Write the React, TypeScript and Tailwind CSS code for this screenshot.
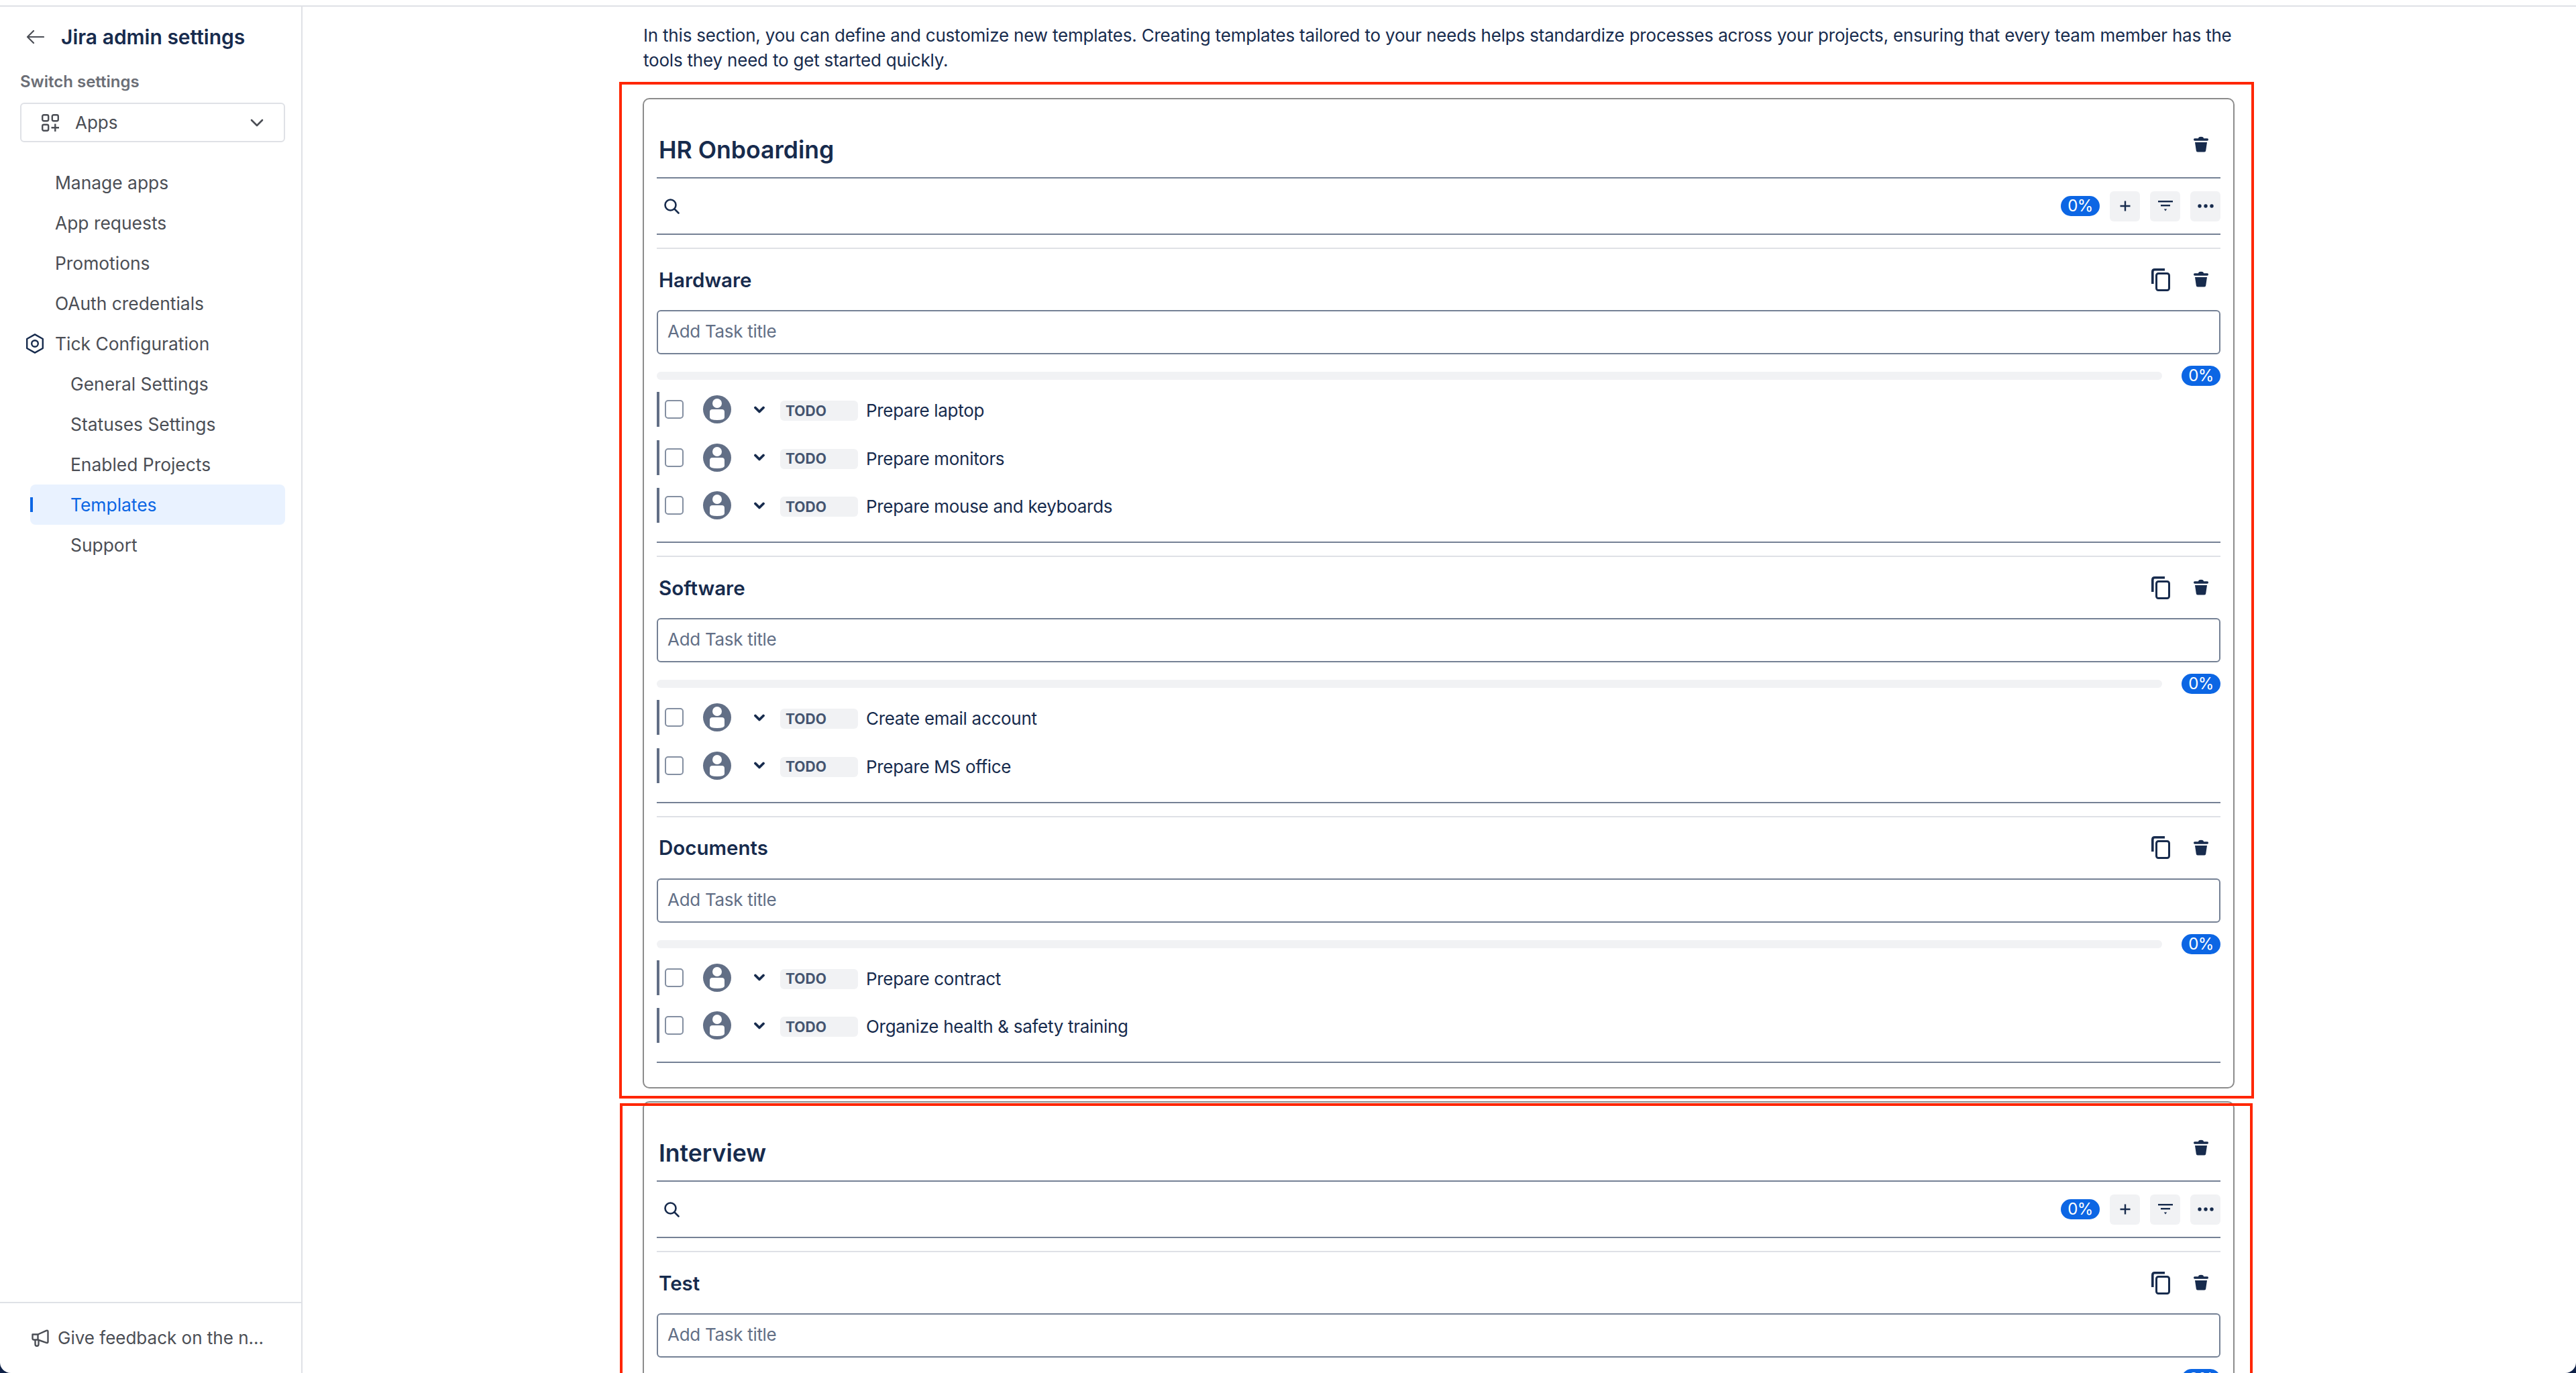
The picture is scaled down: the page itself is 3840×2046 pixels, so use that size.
import React from "react";

const Trash = () => (
  <svg width="22" height="24" viewBox="0 0 22 24" fill="#172b4d">
    <path d="M7 3.2 Q7.5 0.8 11 0.8 Q14.5 0.8 15 3.2 H20.5 Q22 3.2 22 5 Q22 6.8 20.5 6.8 H1.5 Q0 6.8 0 5 Q0 3.2 1.5 3.2 Z" />
    <path d="M2 9 H20 L18.2 21.5 Q18 23.4 16 23.4 H6 Q4 23.4 3.8 21.5 Z" />
  </svg>
);

const CopyIcon = () => (
  <svg width="28" height="34" viewBox="0 0 28 34" fill="none" stroke="#172b4d">
    <path d="M1.8 23 V5 Q1.8 1.8 5 1.8 H20" strokeWidth="3.6" />
    <rect x="7.5" y="7.5" width="19" height="25" rx="3" strokeWidth="3" />
  </svg>
);

const Avatar = () => (
  <svg width="42" height="42" viewBox="0 0 42 42">
    <circle cx="21" cy="21" r="21" fill="#626f86" />
    <circle cx="21" cy="12" r="7" fill="#fff" />
    <path d="M10 25 Q10 21 14 21 H28 Q32 21 32 25 V33 Q32 37 21 37 Q10 37 10 33 Z" fill="#fff" />
  </svg>
);

const SearchIcon = () => (
  <svg width="23" height="23" viewBox="0 0 23 23" fill="none" stroke="#172b4d" strokeWidth="2.6" strokeLinecap="round">
    <circle cx="9.5" cy="9.5" r="8" />
    <path d="M15.5 15.5 L21.5 21.5" />
  </svg>
);

const SmallChevron = () => (
  <svg width="16" height="11" viewBox="0 0 16 11" fill="none" stroke="#172b4d" strokeWidth="3.8" strokeLinecap="round" strokeLinejoin="round">
    <path d="M2 2.5 L8 8.5 L14 2.5" />
  </svg>
);

const Badge = () => (
  <span className="flex h-[30px] w-[58px] shrink-0 items-center justify-center rounded-full bg-[#0c66e4] text-[24px] leading-none tracking-[-0.5px] text-white">
    0%
  </span>
);

const ToolButton = ({ children }: { children: React.ReactNode }) => (
  <span className="flex h-[45px] w-[45px] items-center justify-center rounded-[6px] bg-[#f1f2f4]">{children}</span>
);

const Task = ({ title }: { title: string }) => (
  <div className="flex h-[52px] items-center">
    <span className="h-[52px] w-1 bg-[#626f86]" />
    <span className="ml-2 h-[28px] w-[28px] rounded-[5px] border-2 border-[#8590a2] bg-white" />
    <span className="ml-[29px] flex"><Avatar /></span>
    <span className="ml-[34px] flex"><SmallChevron /></span>
    <span className="ml-[23px] mt-[4px] flex h-[30px] w-[116px] items-center rounded-[6px] bg-[#f1f2f4] pl-[8px] text-[21px] font-bold leading-none text-[#44546f]">
      TODO
    </span>
    <span className="ml-[12px] mt-[4px] text-[26px] leading-[40px] tracking-[-0.3px] text-[#172b4d]">{title}</span>
  </div>
);

const Group = ({ title, tasks, last }: { title: string; tasks: string[]; last?: boolean }) => (
  <section className={`border-t-2 border-[#dfe1e6] ${last ? "" : "mb-[19px]"}`}>
    <div className="flex h-[91px] items-center justify-between pl-[3px]">
      <h3 className="text-[29.5px] font-semibold leading-[40px] text-[#172b4d]">{title}</h3>
      <div className="flex items-center">
        <CopyIcon />
        <span className="mb-[1px] ml-[35px] mr-[18px] flex"><Trash /></span>
      </div>
    </div>
    <input
      placeholder="Add Task title"
      className="block h-[66px] w-full rounded-[6px] border-2 border-[#758195] px-[14px] pb-[3px] text-[26px] tracking-[-0.3px] text-[#172b4d] placeholder:text-[#626f86]"
    />
    <div className="mt-[17px] flex h-[30px] items-center justify-between">
      <div className="h-3 w-[2244px] rounded-full bg-[#f1f2f4]" />
      <Badge />
    </div>
    {tasks.length > 0 && (
      <div className="mt-[9px] flex flex-col gap-[19.5px] border-b-2 border-[#758195] pb-[28px]">
        {tasks.map((t) => (
          <Task key={t} title={t} />
        ))}
      </div>
    )}
  </section>
);

const Card = ({ title, groups }: { title: string; groups: { title: string; tasks: string[] }[] }) => (
  <article className="mb-[19px] rounded-[10px] border-2 border-[#8c8c8c] px-[19px] pb-[36px]">
    <header className="flex h-[118px] items-center justify-between border-b-2 border-[#758195] pl-[3px] pt-[36px]">
      <h2 className="text-[35.6px] font-semibold leading-[48px] text-[#172b4d]">{title}</h2>
      <span className="mb-[18px] mr-[18px] flex"><Trash /></span>
    </header>
    <div className="flex h-[84px] items-center justify-between border-b-2 border-[#758195] pl-[11px]">
      <SearchIcon />
      <div className="flex items-center">
        <Badge />
        <span className="ml-[15px] flex gap-[15px]">
          <ToolButton>
            <svg width="16" height="16" viewBox="0 0 16 16" stroke="#172b4d" strokeWidth="2.4">
              <path d="M8 0.5 V15.5 M0.5 8 H15.5" />
            </svg>
          </ToolButton>
          <ToolButton>
            <svg width="22" height="16" viewBox="0 0 22 16" fill="#172b4d">
              <rect x="0" y="0" width="22" height="2.4" />
              <rect x="4" y="6" width="14" height="2.4" />
              <path d="M8.8 12.5 H13.2 L11 15.5 Z" />
            </svg>
          </ToolButton>
          <ToolButton>
            <svg width="24" height="6" viewBox="0 0 24 6" fill="#172b4d">
              <circle cx="3" cy="3" r="2.7" />
              <circle cx="12" cy="3" r="2.7" />
              <circle cx="21" cy="3" r="2.7" />
            </svg>
          </ToolButton>
        </span>
      </div>
    </div>
    <div className="mt-[19px]">
      {groups.map((g, i) => (
        <Group key={g.title} title={g.title} tasks={g.tasks} last={i === groups.length - 1} />
      ))}
    </div>
  </article>
);

const NavItem = ({ label, indent, active }: { label: string; indent?: boolean; active?: boolean }) => (
  <a
    className={`relative flex h-[60px] items-center rounded-[8px] text-[26.4px] leading-none ${indent ? "pl-[60px]" : "pl-[37px]"} ${
      active ? "bg-[#e9f2ff] text-[#0c66e4]" : "text-[#4b4e55]"
    }`}
  >
    {active && <span className="absolute left-0 top-[19px] h-[22px] w-1 bg-[#0c66e4]" />}
    {label}
  </a>
);

const Sidebar = () => (
  <aside className="flex w-[451px] shrink-0 flex-col border-r-2 border-[#dfe1e6]">
    <div className="flex h-[90px] items-center pl-[39px]">
      <svg width="27" height="22" viewBox="0 0 27 22" fill="none" stroke="#4b4e55" strokeWidth="2.2" strokeLinecap="round" strokeLinejoin="round">
        <path d="M26 11 H2 M11 2 L2 11 L11 20" />
      </svg>
      <h1 className="ml-[25px] text-[30px] font-semibold leading-none text-[#172b4d]">Jira admin settings</h1>
    </div>
    <div className="ml-[30px] mt-[10px] text-[24px] font-semibold leading-[24px] text-[#6b6e76]">Switch settings</div>
    <div className="ml-[30px] mt-[19px] flex h-[59px] w-[395px] items-center rounded-[6px] border-2 border-[#dfe1e6] pl-[30px] pr-[30px]">
      <svg width="26" height="26" viewBox="0 0 26 26" fill="none" stroke="#4b4e55" strokeWidth="2.4">
        <rect x="1.2" y="1.2" width="9" height="9" rx="2.2" />
        <rect x="15.8" y="1.2" width="9" height="9" rx="2.2" />
        <rect x="1.2" y="15.8" width="9" height="9" rx="2.2" />
        <path d="M20.3 14.5 V26 M14.5 20.3 H26" />
      </svg>
      <span className="ml-[24px] flex-1 text-[26px] leading-none text-[#4b4e55]">Apps</span>
      <svg width="20" height="12" viewBox="0 0 20 12" fill="none" stroke="#4b4e55" strokeWidth="2.6" strokeLinecap="round" strokeLinejoin="round">
        <path d="M2 2 L10 10 L18 2" />
      </svg>
    </div>
    <nav className="ml-[45px] mt-[30px] flex w-[380px] flex-col">
      <NavItem label="Manage apps" />
      <NavItem label="App requests" />
      <NavItem label="Promotions" />
      <NavItem label="OAuth credentials" />
      <div className="relative">
        <svg className="absolute left-[-6px] top-[15px]" width="26" height="30" viewBox="0 0 26 30" fill="none" stroke="#172b4d" strokeWidth="2.4">
          <path d="M13 1.4 L24.8 8 V22 L13 28.6 L1.2 22 V8 Z" strokeLinejoin="round" />
          <circle cx="13" cy="15" r="4.8" />
        </svg>
        <NavItem label="Tick Configuration" />
      </div>
      <NavItem label="General Settings" indent />
      <NavItem label="Statuses Settings" indent />
      <NavItem label="Enabled Projects" indent />
      <NavItem label="Templates" indent active />
      <NavItem label="Support" indent />
    </nav>
    <div className="mt-auto flex h-[106px] items-center border-t-2 border-[#dfe1e6] pl-[47px]">
      <svg width="26" height="26" viewBox="0 0 26 26" fill="none" stroke="#4b4e55" strokeWidth="2.4" strokeLinejoin="round">
        <path d="M1.5 7.5 H9.5 L22 1.8 Q24.5 1 24.5 3.5 V18.5 Q24.5 20.5 22 19.8 L9.5 15.5 H3.5 Q1.5 15.5 1.5 13.5 Z" />
        <path d="M9.5 7.5 V15.5" />
        <path d="M5.5 15.5 V22 Q5.5 24.8 8 24.8 Q10.5 24.8 10.5 22 V16" />
      </svg>
      <span className="ml-[13px] text-[26px] leading-none text-[#4b4e55]">Give feedback on the n...</span>
    </div>
  </aside>
);

export default function App() {
  return (
    <div className="relative h-[2046px] w-[3840px] overflow-hidden bg-[#0f2147] font-['Inter',sans-serif]">
      <div className="flex h-full flex-col overflow-hidden rounded-b-[16px] bg-white">
        <div className="h-[10px] shrink-0 border-b-2 border-[#dfe1e6]" />
        <div className="flex min-h-0 flex-1">
          <Sidebar />
          <main className="min-w-0 flex-1 overflow-hidden pl-[507px]">
            <div className="w-[2373px]">
              <p className="mb-[38px] pl-px pt-[24px] text-[26px] leading-[37px] tracking-[-0.2px] text-[#172b4d]">
                In this section, you can define and customize new templates. Creating templates tailored to your needs helps standardize processes across your projects, ensuring that every team member has the tools they need to get started quickly.
              </p>
              <Card
                title="HR Onboarding"
                groups={[
                  { title: "Hardware", tasks: ["Prepare laptop", "Prepare monitors", "Prepare mouse and keyboards"] },
                  { title: "Software", tasks: ["Create email account", "Prepare MS office"] },
                  { title: "Documents", tasks: ["Prepare contract", "Organize health & safety training"] },
                ]}
              />
              <Card title="Interview" groups={[{ title: "Test", tasks: [] }]} />
            </div>
          </main>
        </div>
      </div>
      <div className="pointer-events-none absolute left-[923px] top-[122px] h-[1515px] w-[2437px] border-4 border-[#ff2600]" />
      <div className="pointer-events-none absolute left-[924px] top-[1644px] h-[500px] w-[2434px] border-4 border-[#ff2600]" />
    </div>
  );
}
